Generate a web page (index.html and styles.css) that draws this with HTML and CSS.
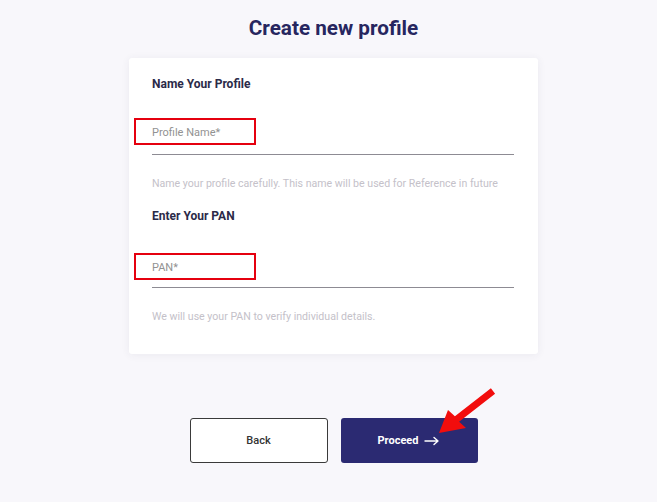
FILE: index.html
```html
<!DOCTYPE html>
<html lang="en">
<head>
<meta charset="utf-8">
<title>Create new profile</title>
<link rel="stylesheet" href="styles.css">
</head>
<body>
<main class="page">
  <h1 class="title">Create new profile</h1>
  <section class="card">
    <h2 class="label">Name Your Profile</h2>
    <div class="field">
      <span class="placeholder">Profile Name*</span>
      <span class="highlight"></span>
    </div>
    <p class="helper">Name your profile carefully. This name will be used for Reference in future</p>
    <h2 class="label label-second">Enter Your PAN</h2>
    <div class="field field-second">
      <span class="placeholder">PAN*</span>
      <span class="highlight"></span>
    </div>
    <p class="helper">We will use your PAN to verify individual details.</p>
  </section>
  <div class="actions">
    <button class="btn btn-back">Back</button>
    <button class="btn btn-proceed">Proceed <span class="arrow">
      <svg width="16" height="10" viewBox="0 0 16 10"><path d="M1 5H14M10 1.5L14 5L10 8.5" fill="none" stroke="#fff" stroke-width="1.4" stroke-linecap="round" stroke-linejoin="round"/></svg>
    </span>
      <svg class="pointer" width="70" height="60" viewBox="0 0 70 60"><path d="M8 47L35 42L28.1 35.8L64.1 7.8L59.9 2.2L23.9 30.2L17 24Z" fill="#f20d0d"/></svg>
    </button>
  </div>
</main>
</body>
</html>
```
FILE: styles.css
```css
* { box-sizing: border-box; }
html, body { margin: 0; padding: 0; }
body {
  background: #f8f7fb;
  font-family: Roboto, "Liberation Sans", Arial, sans-serif;
  width: 657px;
  height: 502px;
  overflow: hidden;
}
.page {
  padding: 16px 0 0 10px;
  display: flex;
  flex-direction: column;
  align-items: center;
}
.title {
  margin: 0;
  font-size: 20.7px;
  line-height: 24px;
  font-weight: 700;
  color: #27265f;
}
.card {
  margin-top: 18px;
  width: 409px;
  background: #fff;
  box-shadow: 0 1px 8px rgba(60, 50, 90, 0.07);
  border-radius: 3px;
  padding: 18px 24px 30px 23px;
}
.label {
  margin: 0;
  font-size: 12px;
  line-height: 16px;
  font-weight: 700;
  color: #2b2a48;
}
.label-second { margin-top: 17px; }
.field {
  position: relative;
  margin-top: 26px;
  height: 37px;
  border-bottom: 1px solid #8d8b93;
}
.field-second { margin-top: 27px; }
.field-second .highlight { top: 2px; }
.field-second .placeholder { top: 10px; }
.placeholder {
  position: absolute;
  left: 0;
  top: 8px;
  font-size: 11px;
  line-height: 14px;
  color: #929292;
}
.highlight {
  position: absolute;
  left: -18px;
  top: 0;
  width: 122px;
  height: 27px;
  border: 2px solid #e5000f;
}
.helper {
  margin: 22px 0 0;
  font-size: 10.6px;
  line-height: 14px;
  color: #c4c1c9;
  white-space: nowrap;
}
.actions {
  margin-top: 64px;
  display: flex;
  gap: 13px;
}
.btn {
  position: relative;
  width: 138px;
  height: 45px;
  border-radius: 3px;
  font-family: Roboto, "Liberation Sans", Arial, sans-serif;
  font-size: 11px;
  display: flex;
  align-items: center;
  justify-content: center;
  gap: 6px;
}
.btn-back {
  background: #fff;
  border: 1px solid #3a3a3a;
  color: #333;
  font-weight: 500;
}
.btn-proceed {
  width: 137px;
  background: #2b2a72;
  border: none;
  color: #fff;
  font-weight: 700;
}
.arrow { display: flex; }
.pointer {
  position: absolute;
  left: 90px;
  top: -32px;
}
```
